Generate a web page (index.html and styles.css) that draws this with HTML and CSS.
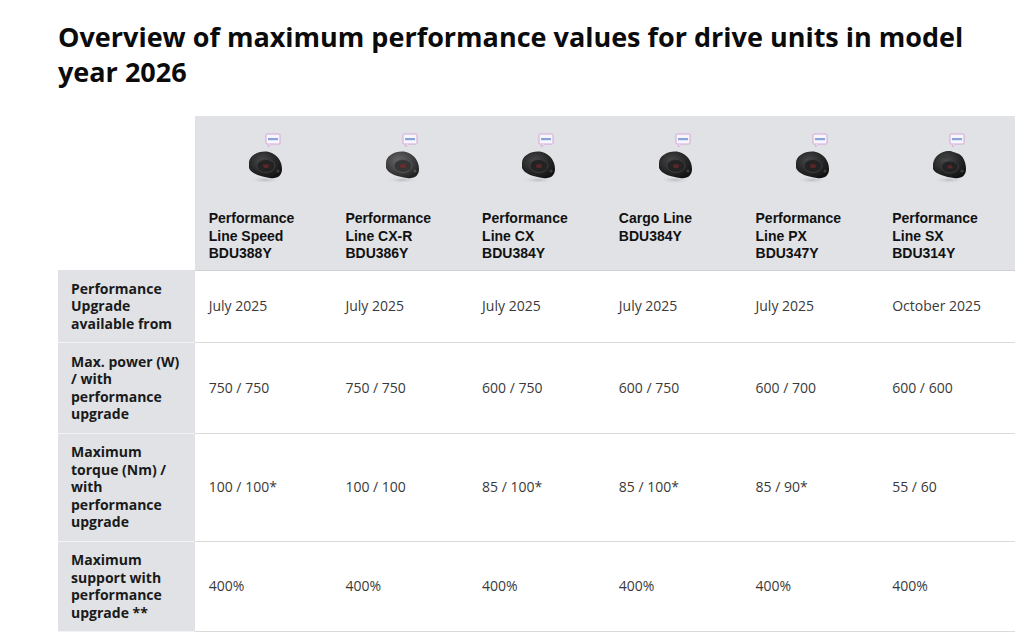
FILE: index.html
```html
<!DOCTYPE html>
<html lang="en">
<head>
<meta charset="utf-8">
<title>Drive units model year 2026</title>
<link rel="stylesheet" href="styles.css">
</head>
<body>
<main class="page">
  <h1 class="title">Overview of maximum performance values for drive units in model year 2026</h1>
  <table class="spec">
    <colgroup>
      <col class="col"><col class="col"><col class="col"><col class="col"><col class="col"><col class="col"><col class="col">
    </colgroup>
    <thead>
      <tr>
        <th class="corner"></th>
        <th class="unit"><div class="unit-pic"><svg viewBox="0 0 62 62" width="62" height="62"><use href="#motor"/></svg></div>Performance Line Speed BDU388Y</th>
        <th class="unit"><div class="unit-pic"><svg viewBox="0 0 62 62" width="62" height="62"><use href="#motor-grey"/></svg></div>Performance Line CX-R BDU386Y</th>
        <th class="unit"><div class="unit-pic"><svg viewBox="0 0 62 62" width="62" height="62"><use href="#motor"/></svg></div>Performance Line CX BDU384Y</th>
        <th class="unit"><div class="unit-pic"><svg viewBox="0 0 62 62" width="62" height="62"><use href="#motor"/></svg></div>Cargo Line BDU384Y</th>
        <th class="unit"><div class="unit-pic"><svg viewBox="0 0 62 62" width="62" height="62"><use href="#motor"/></svg></div>Performance Line PX BDU347Y</th>
        <th class="unit"><div class="unit-pic"><svg viewBox="0 0 62 62" width="62" height="62"><use href="#motor-sx"/></svg></div>Performance Line SX BDU314Y</th>
      </tr>
    </thead>
    <tbody>
      <tr>
        <th class="label">Performance Upgrade available from</th>
        <td>July 2025</td><td>July 2025</td><td>July 2025</td><td>July 2025</td><td>July 2025</td><td>October 2025</td>
      </tr>
      <tr>
        <th class="label">Max. power (W) / with performance upgrade</th>
        <td>750 / 750</td><td>750 / 750</td><td>600 / 750</td><td>600 / 750</td><td>600 / 700</td><td>600 / 600</td>
      </tr>
      <tr>
        <th class="label">Maximum torque (Nm) / with performance upgrade</th>
        <td>100 / 100*</td><td>100 / 100</td><td>85 / 100*</td><td>85 / 100*</td><td>85 / 90*</td><td>55 / 60</td>
      </tr>
      <tr>
        <th class="label">Maximum support with performance upgrade **</th>
        <td>400%</td><td>400%</td><td>400%</td><td>400%</td><td>400%</td><td>400%</td>
      </tr>
    </tbody>
  </table>
</main>

<svg class="defs" width="0" height="0" aria-hidden="true">
  <defs>
    <radialGradient id="body" cx="0.4" cy="0.35" r="0.7">
      <stop offset="0" stop-color="#4a4a4c"/>
      <stop offset="0.6" stop-color="#262627"/>
      <stop offset="1" stop-color="#121212"/>
    </radialGradient>
    <radialGradient id="body-grey" cx="0.4" cy="0.35" r="0.7">
      <stop offset="0" stop-color="#6a6a6c"/>
      <stop offset="0.6" stop-color="#3e3e40"/>
      <stop offset="1" stop-color="#222"/>
    </radialGradient>
    <radialGradient id="shadow" cx="0.5" cy="0.5" r="0.5">
      <stop offset="0" stop-color="#b9bbbf"/>
      <stop offset="1" stop-color="#dfe1e4" stop-opacity="0"/>
    </radialGradient>
    <g id="bubble">
      <rect x="33" y="6" width="14" height="10" rx="1" fill="#f6f6fb" stroke="#d49ed6" stroke-width="0.9"/>
      <path d="M36 16 L35.5 19 L38.5 16" fill="#f6f6fb" stroke="#d49ed6" stroke-width="0.7"/>
      <rect x="35" y="10" width="10" height="2.2" fill="#6f8fd2" opacity="0.8"/>
    </g>
    <g id="motor">
      <ellipse cx="32" cy="52" rx="16" ry="3.5" fill="url(#shadow)"/>
      <use href="#bubble"/>
      <path d="M16 35 C16 27 27 22 36 24 C44 26 49 33 49 41 C49 48 44 51 37 50 C29 49 18 46 16 40 Z" fill="url(#body)"/>
      <ellipse cx="33" cy="38" rx="9" ry="6.5" fill="#232324" stroke="#3c3c3e" stroke-width="1"/>
      <ellipse cx="33" cy="38" rx="3" ry="2" fill="#5a2628"/>
      <circle cx="45" cy="43" r="1.6" fill="#3d3d3f"/>
    </g>
    <g id="motor-grey">
      <ellipse cx="32" cy="52" rx="16" ry="3.5" fill="url(#shadow)"/>
      <use href="#bubble"/>
      <path d="M16 35 C16 27 27 22 36 24 C44 26 49 33 49 41 C49 48 44 51 37 50 C29 49 18 46 16 40 Z" fill="url(#body-grey)"/>
      <ellipse cx="33" cy="38" rx="9" ry="6.5" fill="#353537" stroke="#555" stroke-width="1"/>
      <ellipse cx="33" cy="38" rx="3" ry="2" fill="#6b2a2c"/>
      <circle cx="45" cy="43" r="1.6" fill="#505052"/>
    </g>
    <g id="motor-sx">
      <ellipse cx="32" cy="52" rx="16" ry="3.5" fill="url(#shadow)"/>
      <use href="#bubble"/>
      <path d="M16 36 C17 28 25 23 31 23 C36 23 38 25 42 26 C46 28 49 34 49 41 C49 48 44 51 37 50 C29 49 18 46 16 41 Z" fill="url(#body)"/>
      <path d="M24 28 L30 25 L34 28 L28 31 Z" fill="#3a3a3c"/>
      <ellipse cx="33" cy="39" rx="8.5" ry="6" fill="#232324" stroke="#3c3c3e" stroke-width="1"/>
      <ellipse cx="33" cy="39" rx="2.6" ry="1.8" fill="#5a2628"/>
      <circle cx="45" cy="43" r="1.6" fill="#3d3d3f"/>
    </g>
  </defs>
</svg>
</body>
</html>
```

FILE: styles.css
```css
html, body {
  margin: 0;
  padding: 0;
  background: #ffffff;
}

body {
  font-family: "Open Sans", "Noto Sans", sans-serif;
  color: #333;
}

.page {
  padding: 0 0 0 58px;
}

.title {
  margin: 19px 0 27px;
  width: 957px;
  font-family: "Open Sans", "Noto Sans", sans-serif;
  font-weight: 700;
  font-size: 27px;
  line-height: 35px;
  color: #0b0b0b;
}

.spec {
  width: 957px;
  table-layout: fixed;
  border-collapse: collapse;
  font-size: 14px;
  line-height: 17.5px;
}

.spec .corner {
  background: #ffffff;
}

.spec .unit {
  background: #e0e2e5;
  padding: 12px 12px 7px 14px;
  text-align: left;
  vertical-align: top;
  font-family: "Liberation Sans", Arial, sans-serif;
  font-weight: 700;
  color: #111;
  border-bottom: 1px solid #cfd1d4;
}

.unit-pic {
  display: flex;
  justify-content: center;
  height: 62px;
  margin-bottom: 20px;
}

.unit-pic svg {
  display: block;
}

.spec .label {
  background: #e0e2e5;
  padding: 9.5px 10px 10px 13px;
  text-align: left;
  vertical-align: middle;
  font-weight: 700;
  color: #1a1a1a;
  border-bottom: 1px solid #f3f3f4;
}

.spec td {
  padding: 9.5px 10px 10px 14px;
  vertical-align: middle;
  color: #3a3a3a;
  border-bottom: 1px solid #dadada;
}

.defs {
  position: absolute;
  width: 0;
  height: 0;
  overflow: hidden;
}
```
